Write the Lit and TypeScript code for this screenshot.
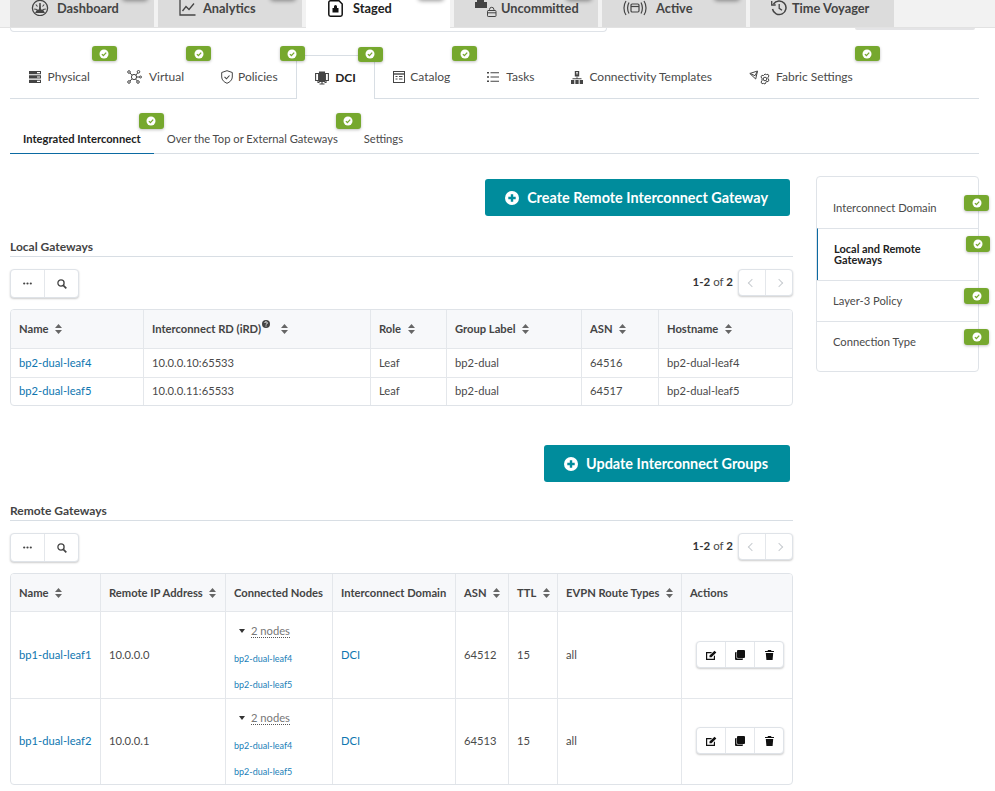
import { LitElement, css, html } from "lit";
import { customElement } from "lit/decorators.js";

const icons: Record<string, unknown> = {
  dashboard: html`<svg class="i" width="18" height="16" viewBox="0 0 18 16" fill="none" stroke="currentColor"><circle cx="9" cy="8" r="7.6" stroke-width="1.300"/><path d="M3.200 9 6 9.500M14.800 9 12 9.500M4.800 4.500 6.500 6.500M13.200 4.500 11.500 6.500" stroke-width="1.100"/><path d="M8.300 3h1.400L10 9.500h2l2 3.500H4l2-3.500h2z" fill="currentColor" stroke="none"/></svg>`,
  analytics: html`<svg class="i" width="17" height="16" viewBox="0 0 17 16" fill="none" stroke="currentColor" stroke-width="1.300"><path d="M1 0v15h15.500"/><path d="M3.500 11 7 6.500l3 3L15 3.500"/></svg>`,
  staged: html`<svg class="i" width="16" height="17" viewBox="0 0 16 17" fill="none" stroke="currentColor"><path d="M2.500.8h8.500l3.200 3.200v10.500a1.700 1.700 0 0 1-1.700 1.700H2.500A1.700 1.700 0 0 1 .8 14.500V2.500A1.700 1.700 0 0 1 2.500.8z" stroke-width="1.500"/><path d="M6 8V6.500a1.500 1.500 0 0 1 3 0V8h1.500v4.500h-6V8z" fill="currentColor" stroke="none"/></svg>`,
  uncommitted: html`<svg class="i" width="22" height="17" viewBox="0 0 22 17" fill="none" stroke="currentColor"><path d="M0 2h2V0h7v2h3v6H0z" fill="currentColor" stroke="none"/><path d="M13 10.500h7.500a.8.8 0 0 1 .5.800v4.500a.7.700 0 0 1-.7.700h-7.100a.7.700 0 0 1-.7-.7v-4.500a.8.800 0 0 1 .5-.8zM14.500 10.500V9.500a2.200 2.200 0 0 1 4.400 0v1M12.500 12.800h8.500" stroke-width="1"/></svg>`,
  active: html`<svg class="i" width="24" height="16" viewBox="0 0 24 16" fill="none" stroke="currentColor" stroke-width="1.200"><path d="M3 1C.3 5 .3 11 3 15M6 2.500C4.200 6 4.200 10 6 13.500M21 1c2.700 4 2.700 10 0 14M18 2.500c1.800 3.500 1.800 7.500 0 11"/><rect x="8" y="4" width="8" height="8" rx="1.200"/><path d="M8 6.500h8"/></svg>`,
  voyager: html`<svg class="i" width="16" height="16" viewBox="0 0 16 16" fill="none" stroke="currentColor" stroke-width="1.500"><path d="M2.500 4A6.800 6.800 0 1 1 1.500 9"/><path d="M.7 1v4h4" stroke-width="1.300"/><path d="M8.200 4v4.300l2.800 2" stroke-width="1.300"/></svg>`,
  physical: html`<svg class="i" width="12" height="12" viewBox="0 0 12 12" fill="currentColor"><path d="M0 0h12v3.300H0zM0 4.300h12v3.300H0zM0 8.700h12V12H0z"/><path d="M8 1h3v1.200H8zM8 5.400h3v1.200H8zM8 9.700h3v1.200H8z" fill="#fff"/></svg>`,
  virtual: html`<svg class="i" width="15" height="14" viewBox="0 0 15 14" fill="none" stroke="currentColor" stroke-width="1"><circle cx="7" cy="7" r="2.600"/><circle cx="2" cy="2" r="1.300"/><circle cx="11.500" cy="1.800" r="1.300"/><circle cx="2" cy="12" r="1.300"/><circle cx="11" cy="12" r="1.300"/><circle cx="13.500" cy="7" r="1"/><path d="m3 3 2 2.200M10.800 2.800 8.800 5.200M3 11l2-2.200M10.300 11 8.600 9M9.600 7h3"/></svg>`,
  policies: html`<svg class="i" width="12" height="14" viewBox="0 0 12 14" fill="none" stroke="currentColor" stroke-width="1"><path d="M6 .7 11.300 2.500V7c0 3-2.500 5.200-5.300 6.300C3.200 12.200.7 10 .7 7V2.500z"/><path d="m3.500 6.800 2 2 3-3.300" stroke-width="1.100"/></svg>`,
  dci: html`<svg class="i" width="14" height="14" viewBox="0 0 14 14" fill="none" stroke="currentColor" stroke-width="1.100"><path d="M.6 2.500h3v7h-3zM10.400 2.500h3v7h-3z"/><path d="M4.500 1h5v9.500h-5z" fill="currentColor"/><path d="M7 10.500V13M4.500 13h5M3 9.500v2h1.500M11 9.500v2H9.500"/></svg>`,
  catalog: html`<svg class="i" width="12" height="12" viewBox="0 0 12 12" fill="none" stroke="currentColor" stroke-width="1"><rect x=".5" y=".5" width="11" height="11"/><path d="M.5 3h11" stroke-width="1.400"/><path d="M2.500 5.500h2M6 5.500h3.500M2.500 8h2M6 8h3.500" stroke-width="1"/></svg>`,
  tasks: html`<svg class="i" width="12" height="12" viewBox="0 0 12 12" fill="currentColor"><path d="M0 1h2v1.600H0zM0 5.200h2v1.600H0zM0 9.400h2V11H0zM3.500 1.300H12v1H3.500zM3.500 5.500H12v1H3.500zM3.500 9.700H12v1H3.500z"/></svg>`,
  connectivity: html`<svg class="i" width="12" height="13" viewBox="0 0 12 13" fill="currentColor"><path d="M3.800 0h4.400v5.500H3.800z"/><path d="M5 1h2v.8H5zM5 2.500h2v.8H5z" fill="#fff"/><path d="M5.600 5.500h.8v2h-.8zM1.500 7.200h9v1h-9z"/><path d="M0 9h3.300v4H0zM4.350 9h3.300v4h-3.300zM8.700 9H12v4H8.700z"/></svg>`,
  fabric: html`<svg class="i" width="21" height="15" viewBox="0 0 21 15" fill="none" stroke="currentColor" stroke-width="1"><path d="M.8 3.500 8.500 1 6.700 9z"/><path d="M1.800 3.800 6 5.700l2-3.700"/><circle cx="16" cy="9" r="1.800"/><path d="m16 4 1.500.6 1.500-.3 1 1.700-1 1.200v1.600l1 1.200-1 1.700-1.500-.3L16 14l-1.500-.6-1.500.3-1-1.700 1-1.200V8.200L11.900 7l1-1.700 1.500.3z"/></svg>`,
  plus: html`<svg class="i" width="14" height="14" viewBox="0 0 14 14"><circle cx="7" cy="7" r="7" fill="#fff"/><path d="M3.300 5.800h2.500V3.300h2.400v2.500h2.500v2.400H8.200v2.500H5.800V8.200H3.300z" fill="#008c9c"/></svg>`,
  dots: html`<svg class="i" width="9" height="3" viewBox="0 0 9 3" fill="#444"><circle cx="1.200" cy="1.500" r="1.100"/><circle cx="4.500" cy="1.500" r="1.100"/><circle cx="7.800" cy="1.500" r="1.100"/></svg>`,
  search: html`<svg class="i" width="10" height="10" viewBox="0 0 10 10" fill="none" stroke="#444"><circle cx="4" cy="4" r="3.100" stroke-width="1.300"/><path d="m6.300 6.300 3 3" stroke-width="1.700"/></svg>`,
  edit: html`<svg class="i" width="11" height="10" viewBox="0 0 11 10"><path d="M0 2h6L5 3.200H1.200v5.600h6.600V6.500L9 5.300V10H0z" fill="#111"/><path d="M3.500 5.500 8.500.8l1.800 1.700L5.500 7.200H3.500z" fill="#111"/></svg>`,
  copy: html`<svg class="i" width="10" height="10" viewBox="0 0 10 10" fill="#111"><path d="M3 0h6a1 1 0 0 1 1 1v6a1 1 0 0 1-1 1H3a1 1 0 0 1-1-1V1a1 1 0 0 1 1-1z"/><path d="M0 3a1 1 0 0 1 1-1h.500v5.500c0 .6.400 1 1 1H8V9a1 1 0 0 1-1 1H1a1 1 0 0 1-1-1z"/></svg>`,
  trash: html`<svg class="i" width="9" height="10" viewBox="0 0 9 10" fill="#111"><path d="M3 0h3l.5 1H9v1H0V1h2.500zM.8 3h7.400L7.600 10H1.400z"/></svg>`,
};

const badge = (cls = "") =>
  html`<span class="badge ${cls}"><svg width="10" height="10" viewBox="0 0 10 10"><circle cx="5" cy="5" r="4.500" fill="#fff"/><path d="m2.900 5.100 1.500 1.500 2.800-3" fill="none" stroke="#76a82e" stroke-width="1.300"/></svg></span>`;

const sortIcon = html`<svg class="sort" width="7" height="10" viewBox="0 0 7 10" fill="#666"><path d="M3.500 0 7 4H0zM3.500 10 0 6h7z"/></svg>`;

const topTabs = [
  { label: "Dashboard", icon: "dashboard", gap: 8, ghost: true },
  { label: "Analytics", icon: "analytics", gap: 7, ghost: true },
  { label: "Staged", icon: "staged", gap: 9, ghost: true, active: true },
  { label: "Uncommitted", icon: "uncommitted", gap: 4, ghost: true },
  { label: "Active", icon: "active", gap: 9, ghost: true },
  { label: "Time Voyager", icon: "voyager", gap: 5 },
];

const buildTabs = [
  { label: "Physical", icon: "physical", gap: 7, badge: true },
  { label: "Virtual", icon: "virtual", gap: 7, badge: true },
  { label: "Policies", icon: "policies", gap: 5, badge: true },
  { label: "DCI", icon: "dci", gap: 6, badge: true, active: true },
  { label: "Catalog", icon: "catalog", gap: 5, badge: true },
  { label: "Tasks", icon: "tasks", gap: 7 },
  { label: "Connectivity Templates", icon: "connectivity", gap: 6 },
  { label: "Fabric Settings", icon: "fabric", gap: 6, badge: true },
];

const localRows = [
  ["bp2-dual-leaf4", "10.0.0.10:65533", "Leaf", "bp2-dual", "64516", "bp2-dual-leaf4"],
  ["bp2-dual-leaf5", "10.0.0.11:65533", "Leaf", "bp2-dual", "64517", "bp2-dual-leaf5"],
];

const remoteRows = [
  ["bp1-dual-leaf1", "10.0.0.0", "DCI", "64512", "15", "all"],
  ["bp1-dual-leaf2", "10.0.0.1", "DCI", "64513", "15", "all"],
];

@customElement("app-root")
export class AppRoot extends LitElement {
  static styles = css`
    :host {
      display: block;
      position: relative;
      width: 995px;
      height: 791px;
      overflow: hidden;
      background: #fff;
      font-family: Lato, "Open Sans", sans-serif;
      font-size: 12px;
      color: #4a4a4a;
    }

    .i {
      display: block;
      flex: none;
    }

    /* top navigation */
    .topbar {
      display: flex;
      gap: 4px;
      box-sizing: border-box;
      height: 28px;
      padding-left: 10px;
      background: #f2f2f2;
      border-bottom: 1px solid #e2e2e2;
    }

    .top-tab {
      position: relative;
      display: flex;
      align-items: flex-start;
      box-sizing: border-box;
      width: 144px;
      height: 27px;
      padding-left: 21px;
      background: #dcdcdc;
      color: #444;
      font-size: 12.8px;
      font-weight: 700;
      line-height: 16px;
    }

    .top-tab.active {
      height: 28px;
      padding-left: 22px;
      background: #fff;
      color: #222;
    }

    .top-tab .i {
      color: #444;
    }

    .top-tab.active .i {
      color: #111;
    }

    .ghost {
      position: absolute;
      top: -16px;
      left: 112px;
      width: 26px;
      height: 16px;
      border-radius: 4px;
      box-shadow: 0 1px 4px rgba(0, 0, 0, 0.4);
    }

    .remnants {
      display: flex;
      justify-content: space-between;
      height: 4px;
      margin: 0 20px 0 10px;
    }

    .remnant-left {
      box-sizing: border-box;
      width: 597px;
      height: 4px;
      border: 1px solid #dfe3e8;
      border-top: 0;
      border-radius: 0 0 4px 4px;
    }

    .remnant-right {
      width: 120px;
      height: 2px;
      background: #e4e4e6;
      border-radius: 0 0 4px 4px;
    }

    /* tab rows */
    .build-tabs {
      display: flex;
      box-sizing: border-box;
      width: 969px;
      height: 44px;
      margin: 23px 0 0 10px;
      border-bottom: 1px solid #d8dee4;
    }

    .build-tab {
      display: flex;
      align-items: center;
      box-sizing: border-box;
      height: 44px;
      padding: 0 18.5px;
      font-size: 12px;
      line-height: 16px;
      color: #4a4a4a;
    }

    .build-tab.active {
      padding: 0 18px;
      background: #fff;
      border: 1px solid #d8dee4;
      border-bottom: 0;
      color: #222;
      font-weight: 700;
    }

    .build-tab .i {
      color: #444;
    }

    .label {
      position: relative;
      display: block;
    }

    .badge {
      position: absolute;
      display: flex;
      align-items: center;
      justify-content: center;
      width: 25px;
      height: 15px;
      background: #76a82e;
      border-radius: 3px;
      box-shadow: 0 1px 3px rgba(0, 0, 0, 0.25);
    }

    .label .badge {
      top: -23px;
      left: calc(100% + 2px);
    }

    .sub-tabs {
      display: flex;
      box-sizing: border-box;
      width: 969px;
      height: 29px;
      margin: 26px 0 0 10px;
      border-bottom: 1px solid #d8dee4;
    }

    .sub-tab {
      box-sizing: border-box;
      height: 29px;
      padding: 6px 13px 0;
      font-size: 11.2px;
      line-height: 16px;
      color: #4a4a4a;
    }

    .sub-tab.active {
      border-bottom: 1px solid #0b6aa2;
      color: #222;
      font-weight: 700;
    }

    .sub-tab .label .badge {
      top: -18px;
      left: calc(100% - 2px);
      height: 16px;
    }

    /* page body */
    .content {
      display: flex;
      margin-left: 10px;
    }

    .main {
      width: 783px;
      padding-top: 25px;
    }

    .cta-row {
      display: flex;
      justify-content: flex-end;
      padding-right: 3px;
    }

    .cta-row.second {
      margin-top: 39px;
    }

    .cta {
      display: flex;
      align-items: center;
      gap: 8px;
      box-sizing: border-box;
      height: 37px;
      padding: 0 22px 0 20px;
      background: #008c9c;
      border-radius: 3px;
      color: #fff;
      font-size: 14.4px;
      font-weight: 700;
    }

    .heading {
      box-sizing: border-box;
      height: 19px;
      margin-top: 22px;
      padding-top: 1px;
      border-bottom: 1px solid #d8dee4;
      color: #444;
      font-size: 12px;
      font-weight: 700;
      line-height: 16px;
    }

    .heading.second {
      margin-top: 20px;
    }

    .toolbar {
      display: flex;
      align-items: flex-start;
      justify-content: space-between;
      height: 29px;
      margin: 12px 0 11px;
    }

    .group {
      display: flex;
      box-sizing: border-box;
      background: #fff;
      border: 1px solid #dfe3e8;
      border-radius: 4px;
      box-shadow: 0 1px 2px rgba(0, 0, 0, 0.2);
    }

    .group > span {
      display: flex;
      align-items: center;
      justify-content: center;
      height: 100%;
    }

    .group > span + span {
      border-left: 1px solid #e4e7eb;
    }

    .tools {
      width: 69px;
      height: 29px;
    }

    .tools > span {
      width: 34px;
    }

    .pager {
      display: flex;
      align-items: center;
      gap: 5px;
      color: #4a4a4a;
      font-size: 11.5px;
    }

    .pager-text {
      padding-bottom: 2px;
    }

    .pager b {
      color: #333;
    }

    .pages {
      width: 55px;
      height: 27px;
    }

    .pages > span {
      width: 27px;
    }

    .chev {
      width: 5px;
      height: 5px;
      border-left: 1px solid #c8ccd0;
      border-bottom: 1px solid #c8ccd0;
      transform: rotate(45deg);
    }

    .chev.next {
      transform: rotate(225deg);
    }

    .table-wrap {
      box-sizing: border-box;
      width: 783px;
      overflow: hidden;
      border: 1px solid #dfe3e8;
      border-radius: 4px;
    }

    table {
      width: 781px;
      table-layout: fixed;
      border-collapse: separate;
      border-spacing: 0;
    }

    th,
    td {
      box-sizing: border-box;
      padding: 0 0 1px 8px;
      border-right: 1px solid #e4e7eb;
      border-bottom: 1px solid #e4e7eb;
      font-size: 11.2px;
      font-weight: 400;
      text-align: left;
      white-space: nowrap;
    }

    th:last-child,
    td:last-child {
      border-right: 0;
    }

    tr:last-child td {
      padding-bottom: 2px;
      border-bottom: 0;
    }

    th {
      background: #f7f8fa;
      color: #444;
      font-weight: 700;
    }

    .sort {
      margin-left: 4px;
      vertical-align: -1px;
    }

    .help {
      display: inline-block;
      vertical-align: top;
      margin: -2px 4px 0 1px;
    }

    a {
      color: #0e76b0;
    }

    .local .head-row {
      height: 39px;
    }

    .local .r0 {
      height: 29px;
    }

    .local .r1 {
      height: 27px;
    }

    .remote .head-row {
      height: 38px;
    }

    .remote .r0 {
      height: 87px;
    }

    .remote .r1 {
      height: 85px;
    }

    tr td.nodes-cell {
      padding-top: 11px;
      padding-bottom: 0;
      vertical-align: top;
    }

    .nodes {
      display: flex;
      align-items: center;
      gap: 6px;
      height: 16px;
      padding-left: 5px;
      color: #777;
    }

    .nodes span {
      border-bottom: 1px dotted #555;
      line-height: 13px;
    }

    .caret {
      width: 0;
      height: 0;
      border: 3px solid transparent;
      border-top: 4px solid #333;
      border-bottom: 0;
    }

    .node-link {
      display: block;
      height: 26px;
      color: #1a80b8;
      font-size: 9px;
      line-height: 26px;
    }

    .node-link:last-child {
      height: 25px;
    }

    .nodes + .node-link {
      margin-top: 7px;
    }

    .actions {
      width: 88px;
      height: 27px;
      margin-left: 6px;
    }

    .actions > span {
      width: 29px;
    }

    /* side navigation */
    .side {
      align-self: flex-start;
      box-sizing: border-box;
      width: 163px;
      margin: 22px 0 0 23px;
      border: 1px solid #dfe3e8;
      border-radius: 4px;
      font-size: 11.2px;
      color: #4a4a4a;
    }

    .side-item {
      position: relative;
      display: flex;
      box-sizing: border-box;
      padding-left: 16px;
      line-height: 16px;
    }

    .side-item + .side-item {
      border-top: 1px solid #dfe3e8;
    }

    .side-item .badge {
      top: 7px;
      right: -11px;
      height: 16px;
    }

    .side-item.s0 {
      align-items: flex-end;
      height: 51px;
      padding-bottom: 12px;
    }

    .side-item.s0 .badge {
      top: 18px;
    }

    .side-item.s1 {
      align-items: center;
      height: 52px;
      padding-bottom: 2px;
      border-left: 1px solid #0b6aa2;
      color: #222;
      font-size: 11px;
      font-weight: 700;
      line-height: 11px;
    }

    .side-item.s1 .badge {
      right: -12px;
      width: 24px;
    }

    .side-item.s2 {
      align-items: center;
      height: 41px;
    }

    .side-item.s3 {
      align-items: flex-start;
      height: 50px;
      padding-top: 12px;
    }

    col.l0 { width: 133px; }
    col.l1 { width: 227px; }
    col.l2 { width: 76px; }
    col.l3 { width: 135px; }
    col.l4 { width: 77px; }
    col.l5 { width: 133px; }
    col.m0 { width: 90px; }
    col.m1 { width: 125px; }
    col.m2 { width: 107px; }
    col.m3 { width: 123px; }
    col.m4 { width: 53px; }
    col.m5 { width: 49px; }
    col.m6 { width: 124px; }
    col.m7 { width: 110px; }
  `;

  private toolbar() {
    return html`<div class="toolbar">
      <div class="group tools">
        <span>${icons.dots}</span><span>${icons.search}</span>
      </div>
      <div class="pager">
        <div class="pager-text"><b>1-2</b> of <b>2</b></div>
        <div class="group pages">
          <span><i class="chev"></i></span><span><i class="chev next"></i></span>
        </div>
      </div>
    </div>`;
  }

  private localTable() {
    return html`<div class="table-wrap local">
      <table>
        <colgroup>
          ${[0, 1, 2, 3, 4, 5].map((n) => html`<col class="l${n}" />`)}
        </colgroup>
        <tr class="head-row">
          <th>Name ${sortIcon}</th>
          <th>
            Interconnect RD (iRD)<svg class="help" width="8" height="8" viewBox="0 0 8 8"><circle cx="4" cy="4" r="4" fill="#444"/><path d="M2.800 3a1.200 1.200 0 1 1 1.800 1c-.4.300-.6.400-.6.800M4 5.500v1" fill="none" stroke="#fff"/></svg>
            ${sortIcon}
          </th>
          <th>Role ${sortIcon}</th>
          <th>Group Label ${sortIcon}</th>
          <th>ASN ${sortIcon}</th>
          <th>Hostname ${sortIcon}</th>
        </tr>
        ${localRows.map(
          (row, i) => html`<tr class="r${i}">
            <td><a>${row[0]}</a></td>
            ${row.slice(1).map((cell) => html`<td>${cell}</td>`)}
          </tr>`,
        )}
      </table>
    </div>`;
  }

  private remoteTable() {
    return html`<div class="table-wrap remote">
      <table>
        <colgroup>
          ${[0, 1, 2, 3, 4, 5, 6, 7].map((n) => html`<col class="m${n}" />`)}
        </colgroup>
        <tr class="head-row">
          <th>Name ${sortIcon}</th>
          <th>Remote IP Address ${sortIcon}</th>
          <th>Connected Nodes</th>
          <th>Interconnect Domain</th>
          <th>ASN ${sortIcon}</th>
          <th>TTL ${sortIcon}</th>
          <th>EVPN Route Types ${sortIcon}</th>
          <th>Actions</th>
        </tr>
        ${remoteRows.map(
          (row, i) => html`<tr class="r${i}">
            <td><a>${row[0]}</a></td>
            <td>${row[1]}</td>
            <td class="nodes-cell">
              <div class="nodes"><i class="caret"></i><span>2 nodes</span></div>
              <a class="node-link">bp2-dual-leaf4</a>
              <a class="node-link">bp2-dual-leaf5</a>
            </td>
            <td><a>${row[2]}</a></td>
            <td>${row[3]}</td>
            <td>${row[4]}</td>
            <td>${row[5]}</td>
            <td>
              <div class="group actions">
                <span>${icons.edit}</span><span>${icons.copy}</span><span>${icons.trash}</span>
              </div>
            </td>
          </tr>`,
        )}
      </table>
    </div>`;
  }

  render() {
    return html`
      <div class="topbar">
        ${topTabs.map(
          (t) => html`<div class="top-tab ${t.active ? "active" : ""}">
            ${t.ghost ? html`<i class="ghost"></i>` : ""} ${icons[t.icon]}
            <span style="margin-left:${t.gap}px">${t.label}</span>
          </div>`,
        )}
      </div>
      <div class="remnants">
        <div class="remnant-left"></div>
        <div class="remnant-right"></div>
      </div>

      <div class="build-tabs">
        ${buildTabs.map(
          (t) => html`<div class="build-tab ${t.active ? "active" : ""}">
            ${icons[t.icon]}
            <span class="label" style="margin-left:${t.gap}px">${t.label}${t.badge ? badge() : ""}</span>
          </div>`,
        )}
      </div>

      <div class="sub-tabs">
        <div class="sub-tab active"><span class="label">Integrated Interconnect${badge()}</span></div>
        <div class="sub-tab"><span class="label">Over the Top or External Gateways${badge()}</span></div>
        <div class="sub-tab"><span class="label">Settings</span></div>
      </div>

      <div class="content">
        <div class="main">
          <div class="cta-row">
            <div class="cta">${icons.plus}Create Remote Interconnect Gateway</div>
          </div>
          <div class="heading">Local Gateways</div>
          ${this.toolbar()} ${this.localTable()}
          <div class="cta-row second">
            <div class="cta">${icons.plus}Update Interconnect Groups</div>
          </div>
          <div class="heading second">Remote Gateways</div>
          ${this.toolbar()} ${this.remoteTable()}
        </div>
        <div class="side">
          <div class="side-item s0">Interconnect Domain${badge()}</div>
          <div class="side-item s1">Local and Remote<br />Gateways${badge()}</div>
          <div class="side-item s2">Layer-3 Policy${badge()}</div>
          <div class="side-item s3">Connection Type${badge()}</div>
        </div>
      </div>
    `;
  }
}
